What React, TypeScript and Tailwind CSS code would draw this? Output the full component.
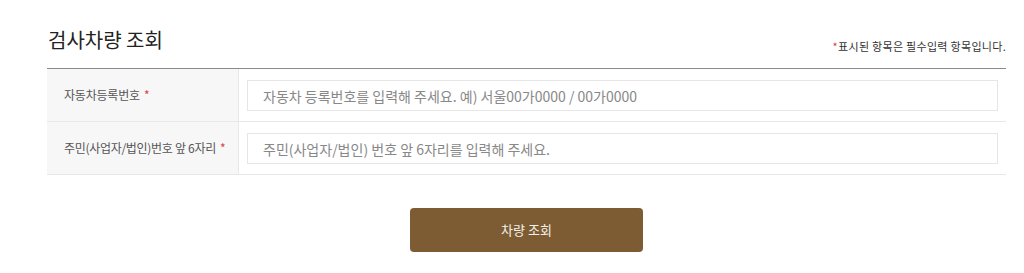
import React from "react";

export default function App() {
  const font = { fontFamily: '"Noto Sans CJK KR", "Noto Sans", sans-serif' };
  return (
    <div className="w-[1024px] h-[273px] bg-white" style={font}>
      <div className="w-[959px] ml-[47px] pt-[19px]">
        <div className="flex items-end justify-between h-[49px] pb-[14px]">
          <h2 className="text-[20px] leading-[28px] text-[#222] font-normal pl-[1px]">검사차량 조회</h2>
          <p className="text-[11px] leading-[14px] text-[#333] pb-[1px] tracking-[0.3px]">
            <span className="text-[#e0403d]">*</span>표시된 항목은 필수입력 항목입니다.
          </p>
        </div>
        <div className="border-t border-[#8a8a8a]">
          <div className="grid grid-cols-[192px_1fr] border-b border-[#e8e8e8]">
            <div className="bg-[#f7f7f7] border-r border-[#e8e8e8] flex items-center pl-[17px] text-[12px] text-[#555] tracking-[-0.2px]">
              자동차등록번호 <span className="text-[#e0403d] ml-[4px]">*</span>
            </div>
            <div className="pl-[8px] pr-[8px] pt-[11px] pb-[10px]">
              <input
                className="w-full h-[31px] border border-[#e6e6e6] px-[15px] text-[14px] text-[#333] placeholder:text-[#888] outline-none"
                placeholder="자동차 등록번호를 입력해 주세요. 예) 서울00가0000 / 00가0000"
                style={font}
              />
            </div>
          </div>
          <div className="grid grid-cols-[192px_1fr] border-b border-[#e8e8e8]">
            <div className="bg-[#f7f7f7] border-r border-[#e8e8e8] flex items-center pl-[17px] text-[12px] text-[#555] tracking-[-0.3px]">
              주민(사업자/법인)번호 앞 6자리 <span className="text-[#e0403d] ml-[4px]">*</span>
            </div>
            <div className="pl-[8px] pr-[8px] pt-[11px] pb-[10px]">
              <input
                className="w-full h-[31px] border border-[#e6e6e6] px-[15px] text-[14px] text-[#333] placeholder:text-[#888] outline-none"
                placeholder="주민(사업자/법인) 번호 앞 6자리를 입력해 주세요."
                style={font}
              />
            </div>
          </div>
        </div>
        <div className="flex justify-center pt-[33px]">
          <button
            className="w-[233px] h-[44px] rounded-[4px] bg-[#7d5c33] text-[13px] text-[#f3f0ea]"
            style={font}
          >
            차량 조회
          </button>
        </div>
      </div>
    </div>
  );
}
